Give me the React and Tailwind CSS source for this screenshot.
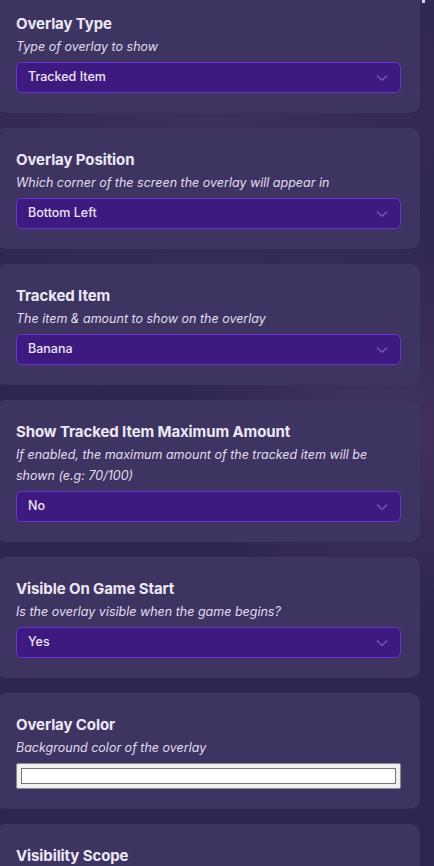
import React from "react";

function Chevron() {
  return (
    <svg width="12" height="8" viewBox="0 0 12 8" fill="none" className="shrink-0">
      <path d="M1 1.5L6 6.5L11 1.5" stroke="#7d5fc0" strokeWidth="1.1" />
    </svg>
  );
}

function Card({ title, desc, children }) {
  return (
    <div className="rounded-[10px] bg-[#3d3462] pl-[20px] pr-[19px] pt-[20px] pb-[20px]">
      <div className="text-[15px] leading-[24px] font-bold tracking-[-0.1px] text-[#ece8f4]">{title}</div>
      <div className="text-[12.5px] leading-[21px] italic text-[#e2ddee]">{desc}</div>
      {children}
    </div>
  );
}

function Select({ value }) {
  return (
    <div className="mt-[5px] h-[31px] rounded-[6px] border border-[#6a34d2] bg-[#3e1a80] flex items-center justify-between pl-[11px] pr-[12px]">
      <span className="text-[12.5px] font-medium text-[#ebe5f7]">{value}</span>
      <Chevron />
    </div>
  );
}

function ColorInput() {
  return (
    <div className="mt-[5px] h-[26px] rounded-[2px] border border-[#8a8a8a] bg-[#efefef] px-[4px] py-[4px]">
      <div className="h-full border border-[#767676] bg-white" />
    </div>
  );
}

export default function App() {
  return (
    <div
      className="w-[434px] h-[866px] overflow-hidden bg-[#2e2553] relative"
      style={{ fontFamily: "Inter, 'Noto Sans', sans-serif" }}
    >
      <div className="absolute inset-0 bg-[radial-gradient(circle_at_210px_100px,#3e2f5c_0%,transparent_40%),radial-gradient(circle_at_380px_430px,#43325e_0%,transparent_35%)]" />
      <div className="relative flex">
        <div className="w-[424px] -ml-[4px] -mt-[8px] flex flex-col gap-[15px]">
          <Card title="Overlay Type" desc="Type of overlay to show">
            <Select value="Tracked Item" />
          </Card>
          <Card title="Overlay Position" desc="Which corner of the screen the overlay will appear in">
            <Select value="Bottom Left" />
          </Card>
          <Card title="Tracked Item" desc="The item & amount to show on the overlay">
            <Select value="Banana" />
          </Card>
          <Card
            title="Show Tracked Item Maximum Amount"
            desc="If enabled, the maximum amount of the tracked item will be shown (e.g: 70/100)"
          >
            <Select value="No" />
          </Card>
          <Card title="Visible On Game Start" desc="Is the overlay visible when the game begins?">
            <Select value="Yes" />
          </Card>
          <Card title="Overlay Color" desc="Background color of the overlay">
            <ColorInput />
          </Card>
          <Card title="Visibility Scope" desc="Who can see the overlay">
            <Select value="Everyone" />
          </Card>
        </div>
        <div className="w-[14px] relative">
          <div className="absolute left-[2px] top-0 w-[3px] h-[3px] bg-[#d8d0ee]" />
        </div>
      </div>
    </div>
  );
}
